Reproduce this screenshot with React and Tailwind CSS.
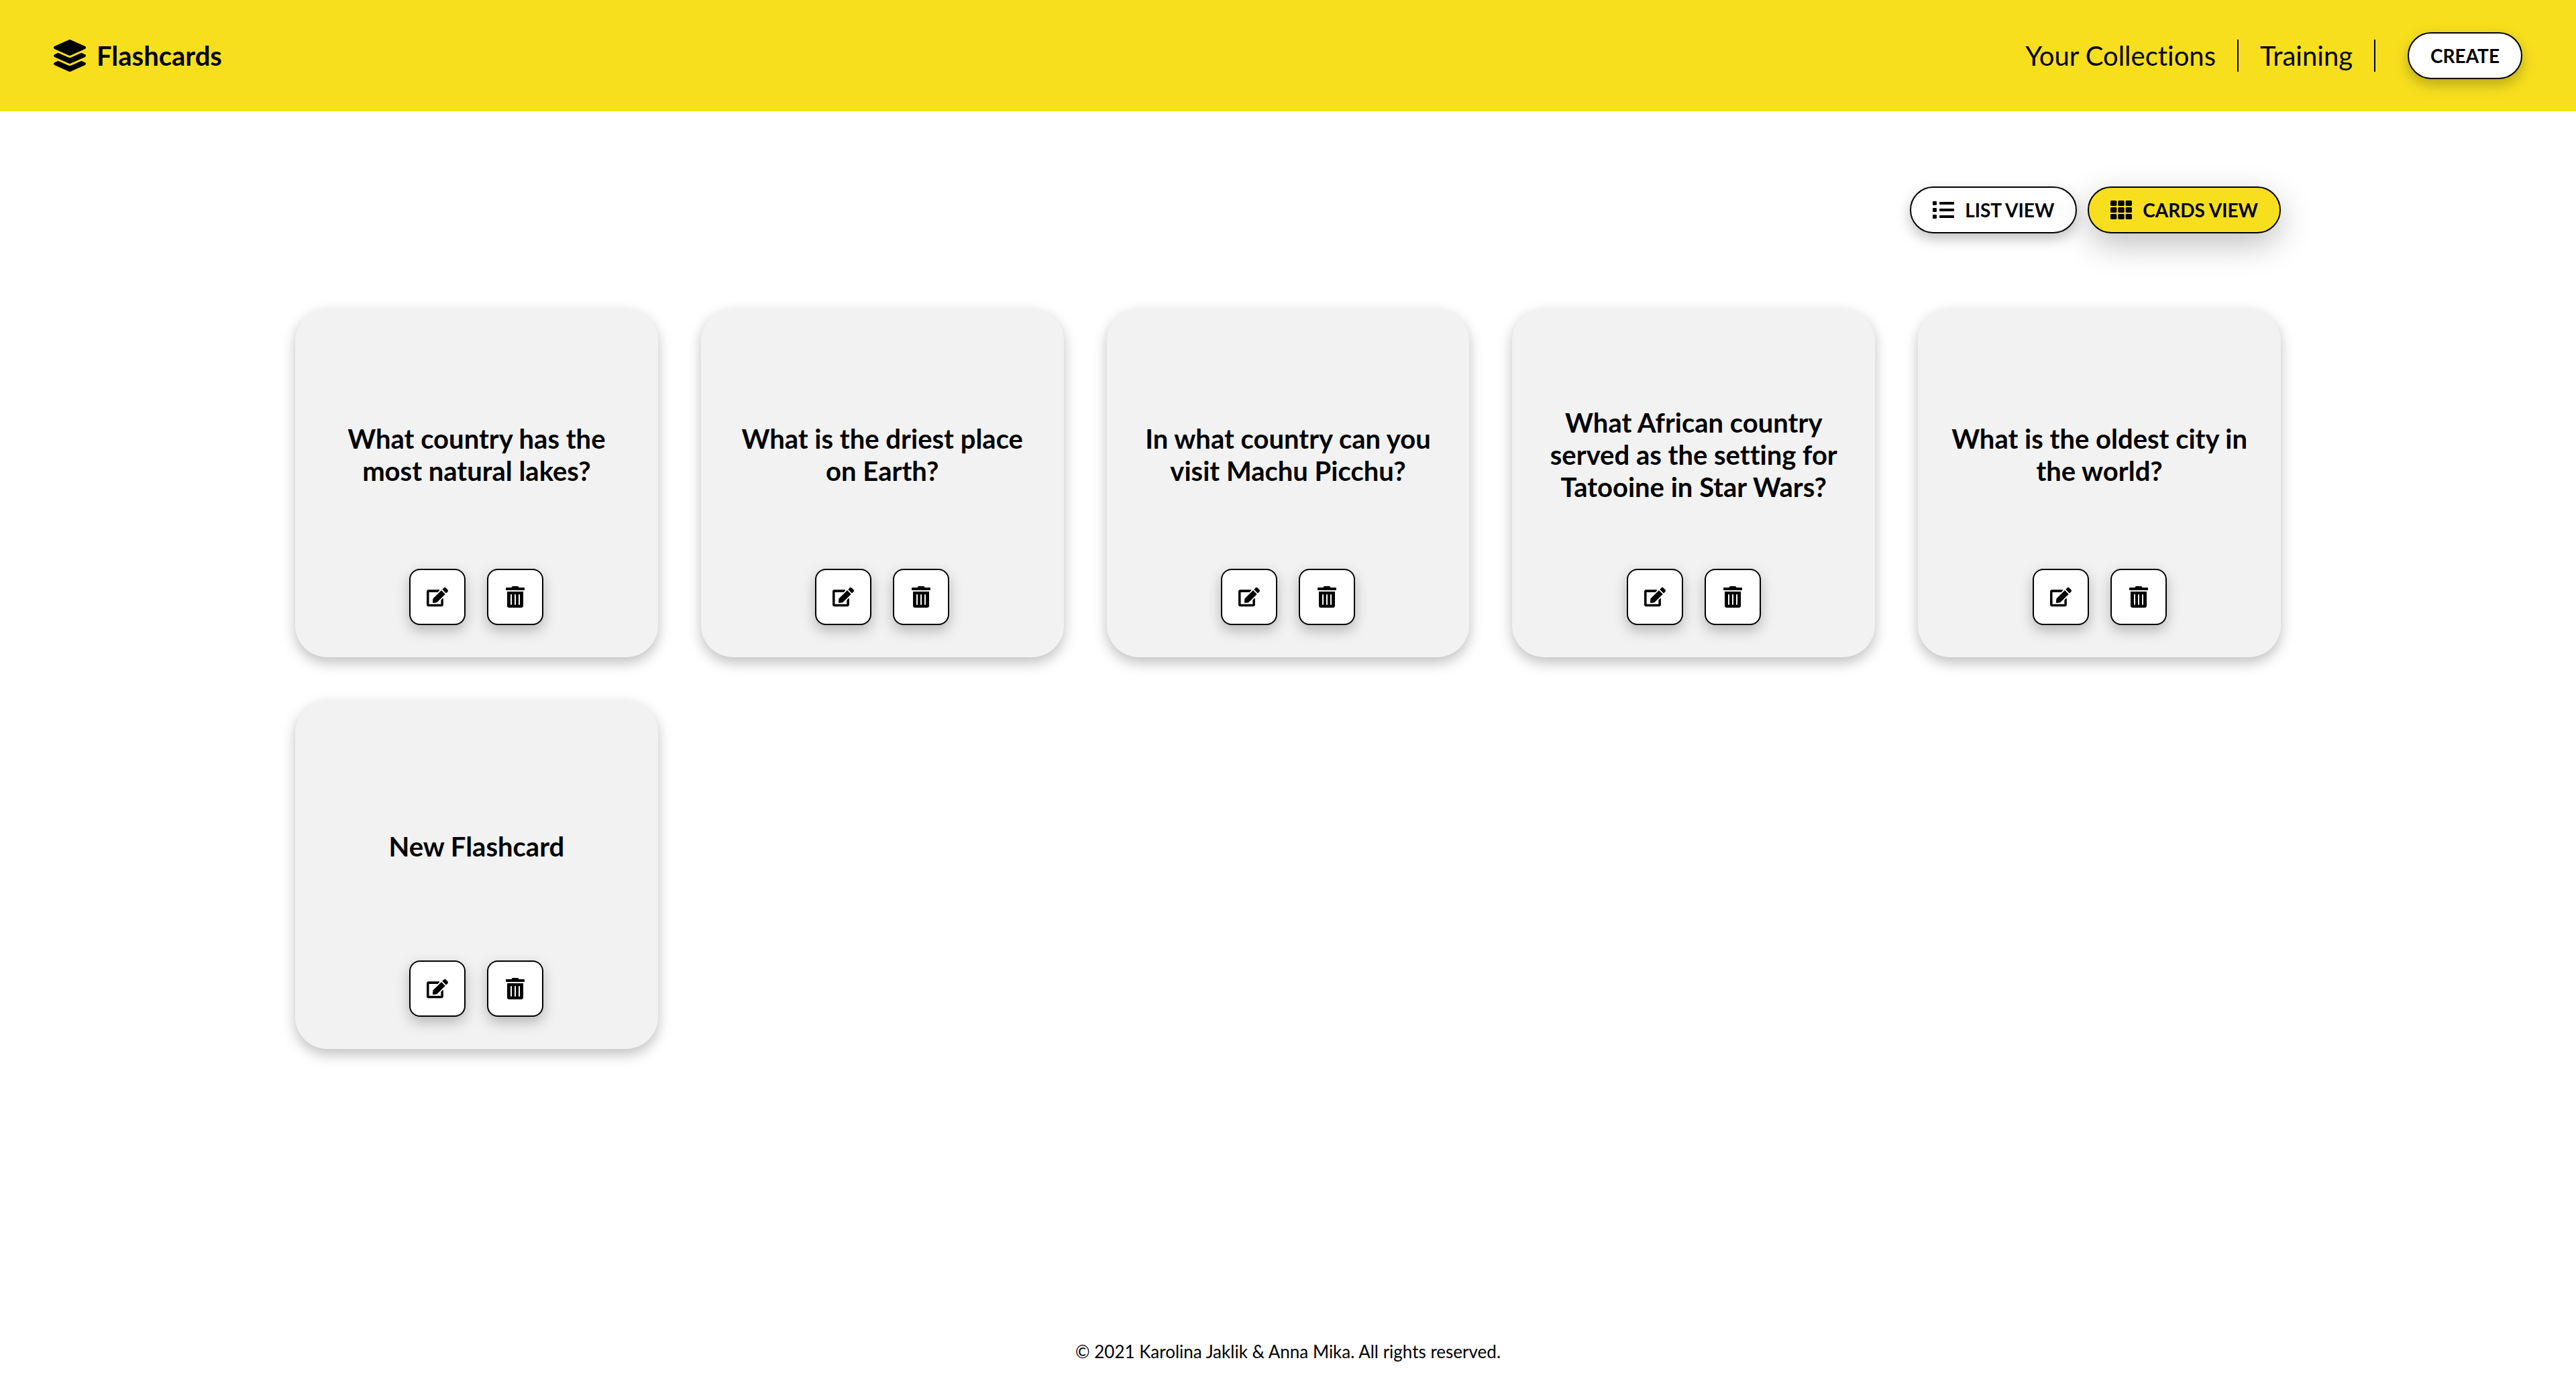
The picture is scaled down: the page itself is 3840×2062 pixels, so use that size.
import React from "react";
import { FaEdit, FaLayerGroup, FaList, FaTh, FaTrashAlt } from "react-icons/fa";

const questions = [
  "What country has the most natural lakes?",
  "What is the driest place on Earth?",
  "In what country can you visit Machu Picchu?",
  "What African country served as the setting for Tatooine in Star Wars?",
  "What is the oldest city in the world?",
  "New Flashcard",
];

const pill =
  "flex items-center gap-4 rounded-full border-2 border-black px-8 py-4 text-[28px] leading-[34px] font-bold uppercase";
const smallShadow = "shadow-[0_8px_20px_rgba(0,0,0,0.25)]";

function IconButton({ label, children }) {
  return (
    <button
      type="button"
      aria-label={label}
      className={`flex size-[84px] items-center justify-center rounded-2xl border-2 border-black bg-white text-[32px] ${smallShadow}`}
    >
      {children}
    </button>
  );
}

function Card({ question }) {
  return (
    <li className="flex h-[520px] flex-col items-center rounded-[48px] bg-[#f2f2f2] p-12 shadow-[0_8px_20px_rgba(0,0,0,0.25)]">
      <h2 className="flex flex-1 items-center text-center text-[40px] leading-[48px] font-bold">
        {question}
      </h2>
      <div className="flex gap-8">
        <IconButton label="Edit flashcard">
          <FaEdit />
        </IconButton>
        <IconButton label="Delete flashcard">
          <FaTrashAlt />
        </IconButton>
      </div>
    </li>
  );
}

export default function App() {
  return (
    <div className="flex min-h-screen flex-col bg-white font-['Lato',sans-serif] text-black [font-variant-ligatures:none]">
      <header className="flex items-center justify-between bg-[#f7df1e] px-20 py-12">
        <a href="#home" className="flex items-center gap-4 text-[40px] leading-[48px] font-bold">
          <FaLayerGroup className="size-12" />
          Flashcards
        </a>
        <nav className="flex items-center text-[40px] leading-[48px]">
          <a href="#collections" className="border-r-2 border-black pr-8">
            Your Collections
          </a>
          <a href="#training" className="mr-12 border-r-2 border-black px-8">
            Training
          </a>
          <button type="button" className={`${pill} bg-white ${smallShadow}`}>
            Create
          </button>
        </nav>
      </header>

      <main className="mx-auto w-full max-w-[2960px] flex-1 py-28">
        <div className="flex justify-end gap-4">
          <button type="button" className={`${pill} bg-white ${smallShadow}`}>
            <FaList className="size-8" />
            List view
          </button>
          <button
            type="button"
            className={`${pill} bg-[#f7df1e] shadow-[0_16px_48px_rgba(0,0,0,0.25)]`}
          >
            <FaTh className="size-8" />
            Cards view
          </button>
        </div>
        <ul className="mt-28 grid grid-cols-5 gap-16">
          {questions.map((question) => (
            <Card key={question} question={question} />
          ))}
        </ul>
      </main>

      <footer className="py-8 text-center text-[26px] leading-[30px]">
        © 2021 Karolina Jaklik &amp; Anna Mika. All rights reserved.
      </footer>
    </div>
  );
}
